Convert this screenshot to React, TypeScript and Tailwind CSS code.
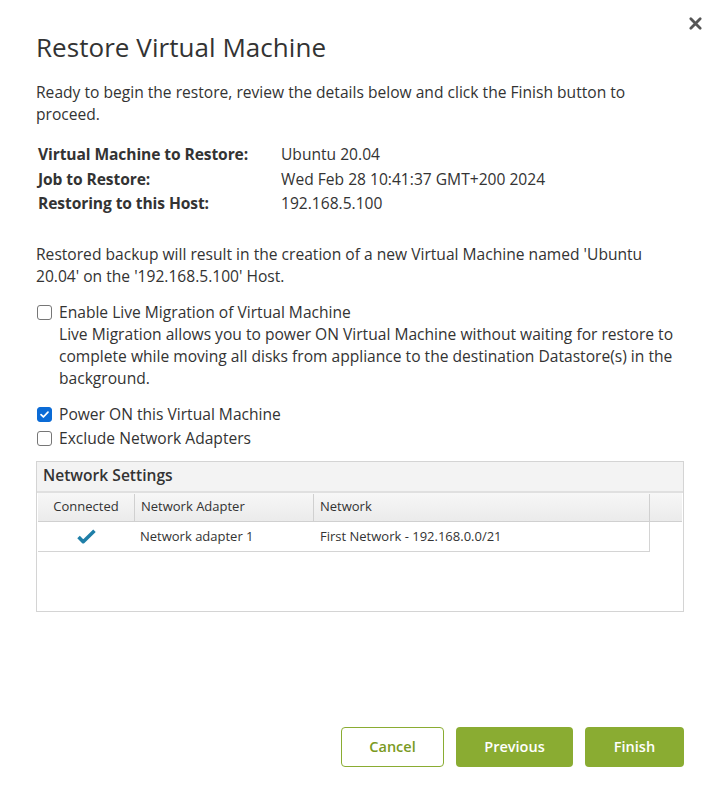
import React, { useState } from 'react';

// Restore wizard – final "ready" step
const DETAILS = [
  { label: 'Virtual Machine to Restore:', value: 'Ubuntu 20.04' },
  { label: 'Job to Restore:', value: 'Wed Feb 28 10:41:37 GMT+200 2024' },
  { label: 'Restoring to this Host:', value: '192.168.5.100' },
];

const Check = ({ checked, onChange }: { checked: boolean; onChange: () => void }) => (
  <button
    type="button"
    onClick={onChange}
    className={`mt-[4px] w-[15px] h-[15px] shrink-0 rounded-[3px] flex items-center justify-center ${
      checked ? 'bg-[#0b6bd6] border border-[#0b6bd6]' : 'bg-white border-[1.5px] border-[#767676]'
    }`}
  >
    {checked && (
      <svg viewBox="0 0 12 12" className="w-[11px] h-[11px]">
        <path d="M2.2 6.2 L4.8 8.7 L9.8 3.4" fill="none" stroke="white" strokeWidth="1.9" strokeLinecap="round" strokeLinejoin="round" />
      </svg>
    )}
  </button>
);

export default function App() {
  const [liveMigration, setLiveMigration] = useState(false);
  const [powerOn, setPowerOn] = useState(true);
  const [excludeNet, setExcludeNet] = useState(false);

  return (
    <div className="relative w-[720px] h-[797px] bg-white text-[#333] font-['Open_Sans',sans-serif]">
      {/* Close */}
      <button className="absolute right-[17px] top-[15px] w-[16px] h-[16px] flex items-center justify-center">
        <svg viewBox="0 0 16 16" className="w-[15px] h-[15px]">
          <path d="M3 3 L13 13 M13 3 L3 13" stroke="#555" strokeWidth="3" strokeLinecap="round" />
        </svg>
      </button>

      <div className="pl-[36px] pr-[36px] pt-[30px]">
        <h1 className="text-[26px] leading-[34px] font-normal tracking-[0.05px]">Restore Virtual Machine</h1>

        <p className="mt-[17px] text-[15.6px] leading-[22px] pr-[10px]">
          Ready to begin the restore, review the details below and click the Finish button to proceed.
        </p>

        <div className="mt-[17px] pl-[2px] text-[15.6px] leading-[24.5px]">
          {DETAILS.map((d) => (
            <div key={d.label} className="flex">
              <span className="w-[243px] font-bold tracking-[-0.1px]">{d.label}</span>
              <span>{d.value}</span>
            </div>
          ))}
        </div>

        <p className="mt-[27px] text-[15.6px] leading-[22px] pr-[4px]">
          Restored backup will result in the creation of a new Virtual Machine named 'Ubuntu 20.04' on the '192.168.5.100' Host.
        </p>

        <div className="mt-[14px] flex gap-[7px] pl-[1px] text-[15.6px] leading-[22.3px]">
          <Check checked={liveMigration} onChange={() => setLiveMigration(!liveMigration)} />
          <div>
            <div>Enable Live Migration of Virtual Machine</div>
            <div>
              Live Migration allows you to power ON Virtual Machine without waiting for restore to complete while moving all disks from appliance to the destination Datastore(s) in the background.
            </div>
          </div>
        </div>

        <div className="mt-[13px] flex flex-col gap-[2px] pl-[1px] text-[15.6px] leading-[22px]">
          <div className="flex gap-[7px]">
            <Check checked={powerOn} onChange={() => setPowerOn(!powerOn)} />
            <span>Power ON this Virtual Machine</span>
          </div>
          <div className="flex gap-[7px]">
            <Check checked={excludeNet} onChange={() => setExcludeNet(!excludeNet)} />
            <span>Exclude Network Adapters</span>
          </div>
        </div>

        {/* Network Settings */}
        <div className="mt-[12px] h-[151px] border border-[#d4d4d4] flex flex-col">
          <div className="h-[31px] bg-[#f3f3f3] border-b-2 border-[#e0e0e0] px-[6px] flex items-center text-[15.6px] font-semibold">
            Network Settings
          </div>
          <div className="px-[1px] text-[13px]">
            <div className="flex h-[29px] bg-gradient-to-b from-[#f7f7f7] to-[#ebebeb] border-b border-[#d0d0d0] items-center pt-[1px]">
              <div className="w-[97px] h-full flex items-center justify-center border-r border-[#d0d0d0]">Connected</div>
              <div className="w-[179px] h-full flex items-center px-[6px] border-r border-[#d0d0d0]">Network Adapter</div>
              <div className="w-[336px] h-full flex items-center px-[6px] border-r border-[#d0d0d0]">Network</div>
              <div className="flex-1 h-full" />
            </div>
            <div className="flex w-[612px] h-[30px] items-center border-r border-b border-[#d4d4d4] pt-[1px]">
              <div className="w-[97px] flex items-center justify-center">
                <svg viewBox="0 0 20 16" className="w-[19px] h-[15px]">
                  <path d="M1.5 8.5 L6.5 13.5 L18.5 1.8" fill="none" stroke="#1f7fa8" strokeWidth="3.8" strokeLinejoin="round" />
                </svg>
              </div>
              <div className="w-[179px] px-[5px]">Network adapter 1</div>
              <div className="flex-1 px-[6px]">First Network - 192.168.0.0/21</div>
            </div>
          </div>
        </div>

        {/* Footer buttons */}
        <div className="mt-[115px] flex justify-end gap-[12px] text-[14.5px] font-semibold">
          <button className="w-[103px] h-[40px] rounded-[4px] border border-[#8aac32] text-[#7a9a22] bg-white">Cancel</button>
          <button className="w-[117px] h-[40px] rounded-[4px] bg-[#8aac32] text-white">Previous</button>
          <button className="w-[99px] h-[40px] rounded-[4px] bg-[#8aac32] text-white">Finish</button>
        </div>
      </div>
    </div>
  );
}
